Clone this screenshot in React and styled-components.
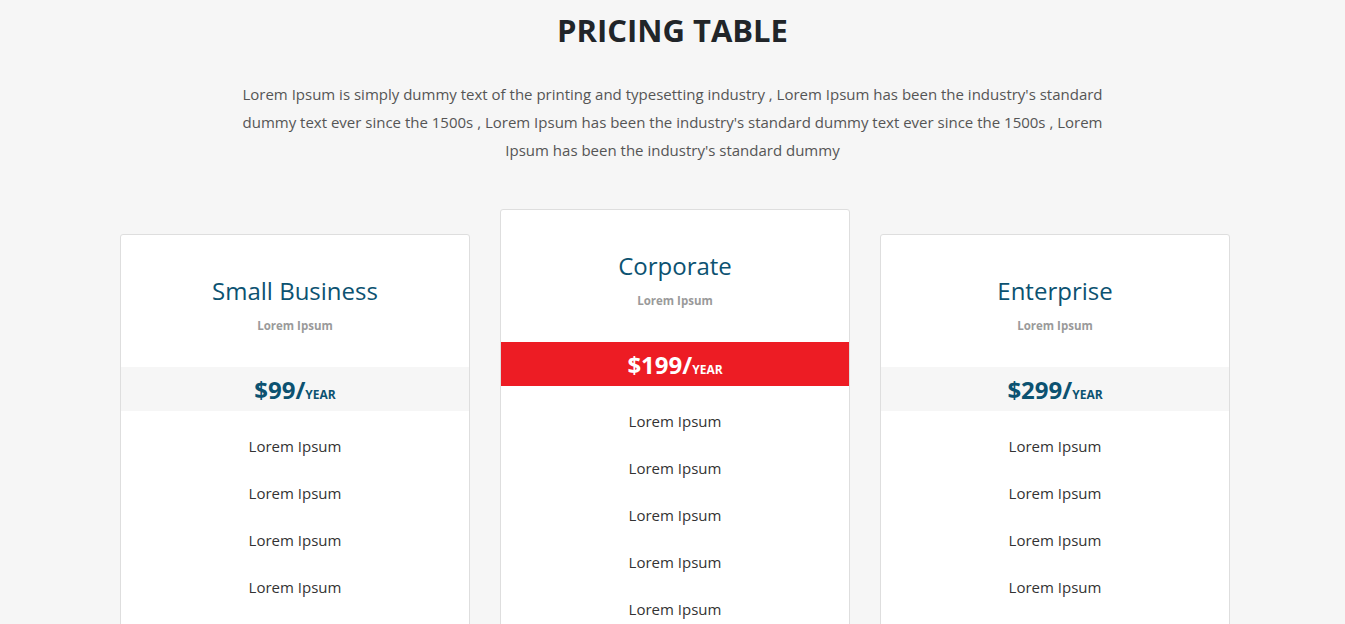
import React from "react";
import styled, { createGlobalStyle } from "styled-components";

const GlobalStyle = createGlobalStyle`
  body {
    margin: 0;
    background-color: #f6f6f6;
    font-family: "Open Sans", "Noto Sans", sans-serif;
  }
`;

const Section = styled.section`
  padding: 11px 0 0;
  text-align: center;
`;

const Heading = styled.h1`
  margin: 0;
  font-size: 31px;
  line-height: 38px;
  font-weight: 700;
  color: #212529;
`;

const Intro = styled.p`
  max-width: 880px;
  margin: 31px auto 0;
  font-size: 15px;
  line-height: 28px;
  color: #555;
`;

const Row = styled.div`
  display: flex;
  justify-content: center;
  align-items: flex-start;
  gap: 30px;
  margin-top: 45px;
  padding-left: 5px;
`;

const Card = styled.div`
  width: 350px;
  box-sizing: border-box;
  margin-top: ${(p) => (p.featured ? "0" : "25px")};
  background: #fff;
  border: 1px solid #dedede;
  border-radius: 3px;
`;

const Header = styled.div`
  padding: 41px 0 33px;
`;

const PlanName = styled.h3`
  margin: 0;
  font-size: 24px;
  line-height: 29px;
  font-weight: 400;
  color: #0c5271;
`;

const Tagline = styled.div`
  margin-top: 12px;
  font-size: 11.5px;
  line-height: 17px;
  font-weight: 700;
  color: #9a9a9a;
`;

const Price = styled.div`
  height: 44px;
  line-height: 46px;
  background: ${(p) => (p.featured ? "#ed1c24" : "#f6f6f6")};
  color: ${(p) => (p.featured ? "#fff" : "#0c5271")};
  font-size: 24px;
  font-weight: 700;
`;

const Unit = styled.span`
  font-size: 12px;
`;

const Features = styled.ul`
  list-style: none;
  margin: 0;
  padding: 12px 0 0;
`;

const Feature = styled.li`
  padding: 12px 0;
  line-height: 23px;
  font-size: 15px;
  color: #333;
`;

const plans = [
  { id: 1, name: "Small Business", price: "$99/" },
  { id: 2, name: "Corporate", price: "$199/", featured: true },
  { id: 3, name: "Enterprise", price: "$299/" },
];

const features = ["Lorem Ipsum", "Lorem Ipsum", "Lorem Ipsum", "Lorem Ipsum", "Lorem Ipsum"];

export default function App() {
  return (
    <>
      <GlobalStyle />
      <Section>
        <Heading>PRICING TABLE</Heading>
        <Intro>
          Lorem Ipsum is simply dummy text of the printing and typesetting industry , Lorem Ipsum has
          been the industry's standard dummy text ever since the 1500s , Lorem Ipsum has been the
          industry's standard dummy text ever since the 1500s , Lorem Ipsum has been the industry's
          standard dummy
        </Intro>
        <Row>
          {plans.map((plan) => (
            <Card key={plan.id} featured={plan.featured}>
              <Header>
                <PlanName>{plan.name}</PlanName>
                <Tagline>Lorem Ipsum</Tagline>
              </Header>
              <Price featured={plan.featured}>
                {plan.price}
                <Unit>YEAR</Unit>
              </Price>
              <Features>
                {features.map((f, i) => (
                  <Feature key={i}>{f}</Feature>
                ))}
              </Features>
            </Card>
          ))}
        </Row>
      </Section>
    </>
  );
}
